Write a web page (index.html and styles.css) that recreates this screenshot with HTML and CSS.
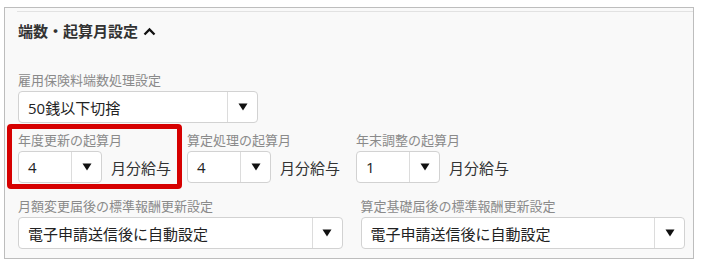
FILE: index.html
```html
<!DOCTYPE html>
<html lang="ja">
<head>
<meta charset="utf-8">
<link rel="stylesheet" href="styles.css">
</head>
<body>
<div class="panel">
  <div class="sep"></div>
  <div class="title">端数・起算月設定
    <svg class="chev" width="13" height="9" viewBox="0 0 13 9"><polyline points="1.5,7.5 6.5,2.5 11.5,7.5" fill="none" stroke="#111" stroke-width="2.3"/></svg>
  </div>

  <div class="row1">
    <div class="label">雇用保険料端数処理設定</div>
    <div class="select wide1">
      <span class="val">50銭以下切捨</span>
      <span class="arr"><svg width="10" height="8" viewBox="0 0 10 8"><polygon points="0.5,0.5 9.5,0.5 5,7.5" fill="#111"/></svg></span>
    </div>
  </div>

  <div class="row2">
    <div class="group marked">
      <div class="label">年度更新の起算月</div>
      <div class="inline">
        <div class="select small">
          <span class="val">4</span>
          <span class="arr"><svg width="10" height="8" viewBox="0 0 10 8"><polygon points="0.5,0.5 9.5,0.5 5,7.5" fill="#111"/></svg></span>
        </div>
        <span class="unit">月分給与</span>
      </div>
    </div>
    <div class="group">
      <div class="label">算定処理の起算月</div>
      <div class="inline">
        <div class="select small">
          <span class="val">4</span>
          <span class="arr"><svg width="10" height="8" viewBox="0 0 10 8"><polygon points="0.5,0.5 9.5,0.5 5,7.5" fill="#111"/></svg></span>
        </div>
        <span class="unit">月分給与</span>
      </div>
    </div>
    <div class="group">
      <div class="label">年末調整の起算月</div>
      <div class="inline">
        <div class="select small">
          <span class="val">1</span>
          <span class="arr"><svg width="10" height="8" viewBox="0 0 10 8"><polygon points="0.5,0.5 9.5,0.5 5,7.5" fill="#111"/></svg></span>
        </div>
        <span class="unit">月分給与</span>
      </div>
    </div>
  </div>

  <div class="row3">
    <div class="col">
      <div class="label">月額変更届後の標準報酬更新設定</div>
      <div class="select">
        <span class="val">電子申請送信後に自動設定</span>
        <span class="arr"><svg width="10" height="8" viewBox="0 0 10 8"><polygon points="0.5,0.5 9.5,0.5 5,7.5" fill="#111"/></svg></span>
      </div>
    </div>
    <div class="col">
      <div class="label">算定基礎届後の標準報酬更新設定</div>
      <div class="select">
        <span class="val">電子申請送信後に自動設定</span>
        <span class="arr"><svg width="10" height="8" viewBox="0 0 10 8"><polygon points="0.5,0.5 9.5,0.5 5,7.5" fill="#111"/></svg></span>
      </div>
    </div>
  </div>
</div>
</body>
</html>
```

FILE: styles.css
```css
html, body {
  margin: 0;
  background: #ffffff;
}
body {
  font-family: "Open Sans", "Noto Sans CJK JP", sans-serif;
  color: #333;
}
.panel {
  margin: 7px 0 0 4px;
  width: 690px;
  height: 252px;
  box-sizing: border-box;
  border: 1px solid #bdbdbd;
  background: #f9f9f9;
  padding: 0 8px 0 13px;
}
.sep {
  margin: 3px -8px 0 -1px;
  border-top: 1px solid #e2e2e2;
}
.title {
  margin-top: 9px;
  font-size: 15px;
  line-height: 20px;
  font-weight: bold;
  color: #333;
  display: flex;
  align-items: center;
  gap: 5px;
}
.chev {
  display: block;
}
.label {
  font-size: 13px;
  line-height: 18px;
  color: #8a8a8a;
  margin-bottom: 2px;
  white-space: nowrap;
}
.row1 {
  margin-top: 30px;
}
.select {
  display: flex;
  height: 32px;
  box-sizing: border-box;
  border: 1px solid #d2d2d2;
  border-radius: 4px;
  background: #fff;
  font-size: 15px;
  color: #222;
}
.select .val {
  flex: 1;
  padding-left: 9px;
  display: flex;
  align-items: center;
  white-space: nowrap;
  overflow: hidden;
}
.select .arr {
  width: 29px;
  border-left: 1px solid #dcdcdc;
  display: flex;
  align-items: center;
  justify-content: center;
}
.wide1 {
  width: 240px;
}
.row2 {
  margin-top: 8px;
  display: flex;
  gap: 16px;
}
.group {
  position: relative;
}
.marked::after {
  content: "";
  position: absolute;
  left: -11px;
  right: -11px;
  top: -7px;
  bottom: -6px;
  border: 5px solid #d60000;
  border-radius: 4px;
  pointer-events: none;
}
.inline {
  display: flex;
  align-items: center;
  gap: 9px;
}
.small {
  width: 84px;
}
.unit {
  font-size: 15px;
  color: #333;
  white-space: nowrap;
}
.row3 {
  margin-top: 14px;
  display: grid;
  grid-template-columns: 1fr 1fr;
  gap: 18px;
}
```
